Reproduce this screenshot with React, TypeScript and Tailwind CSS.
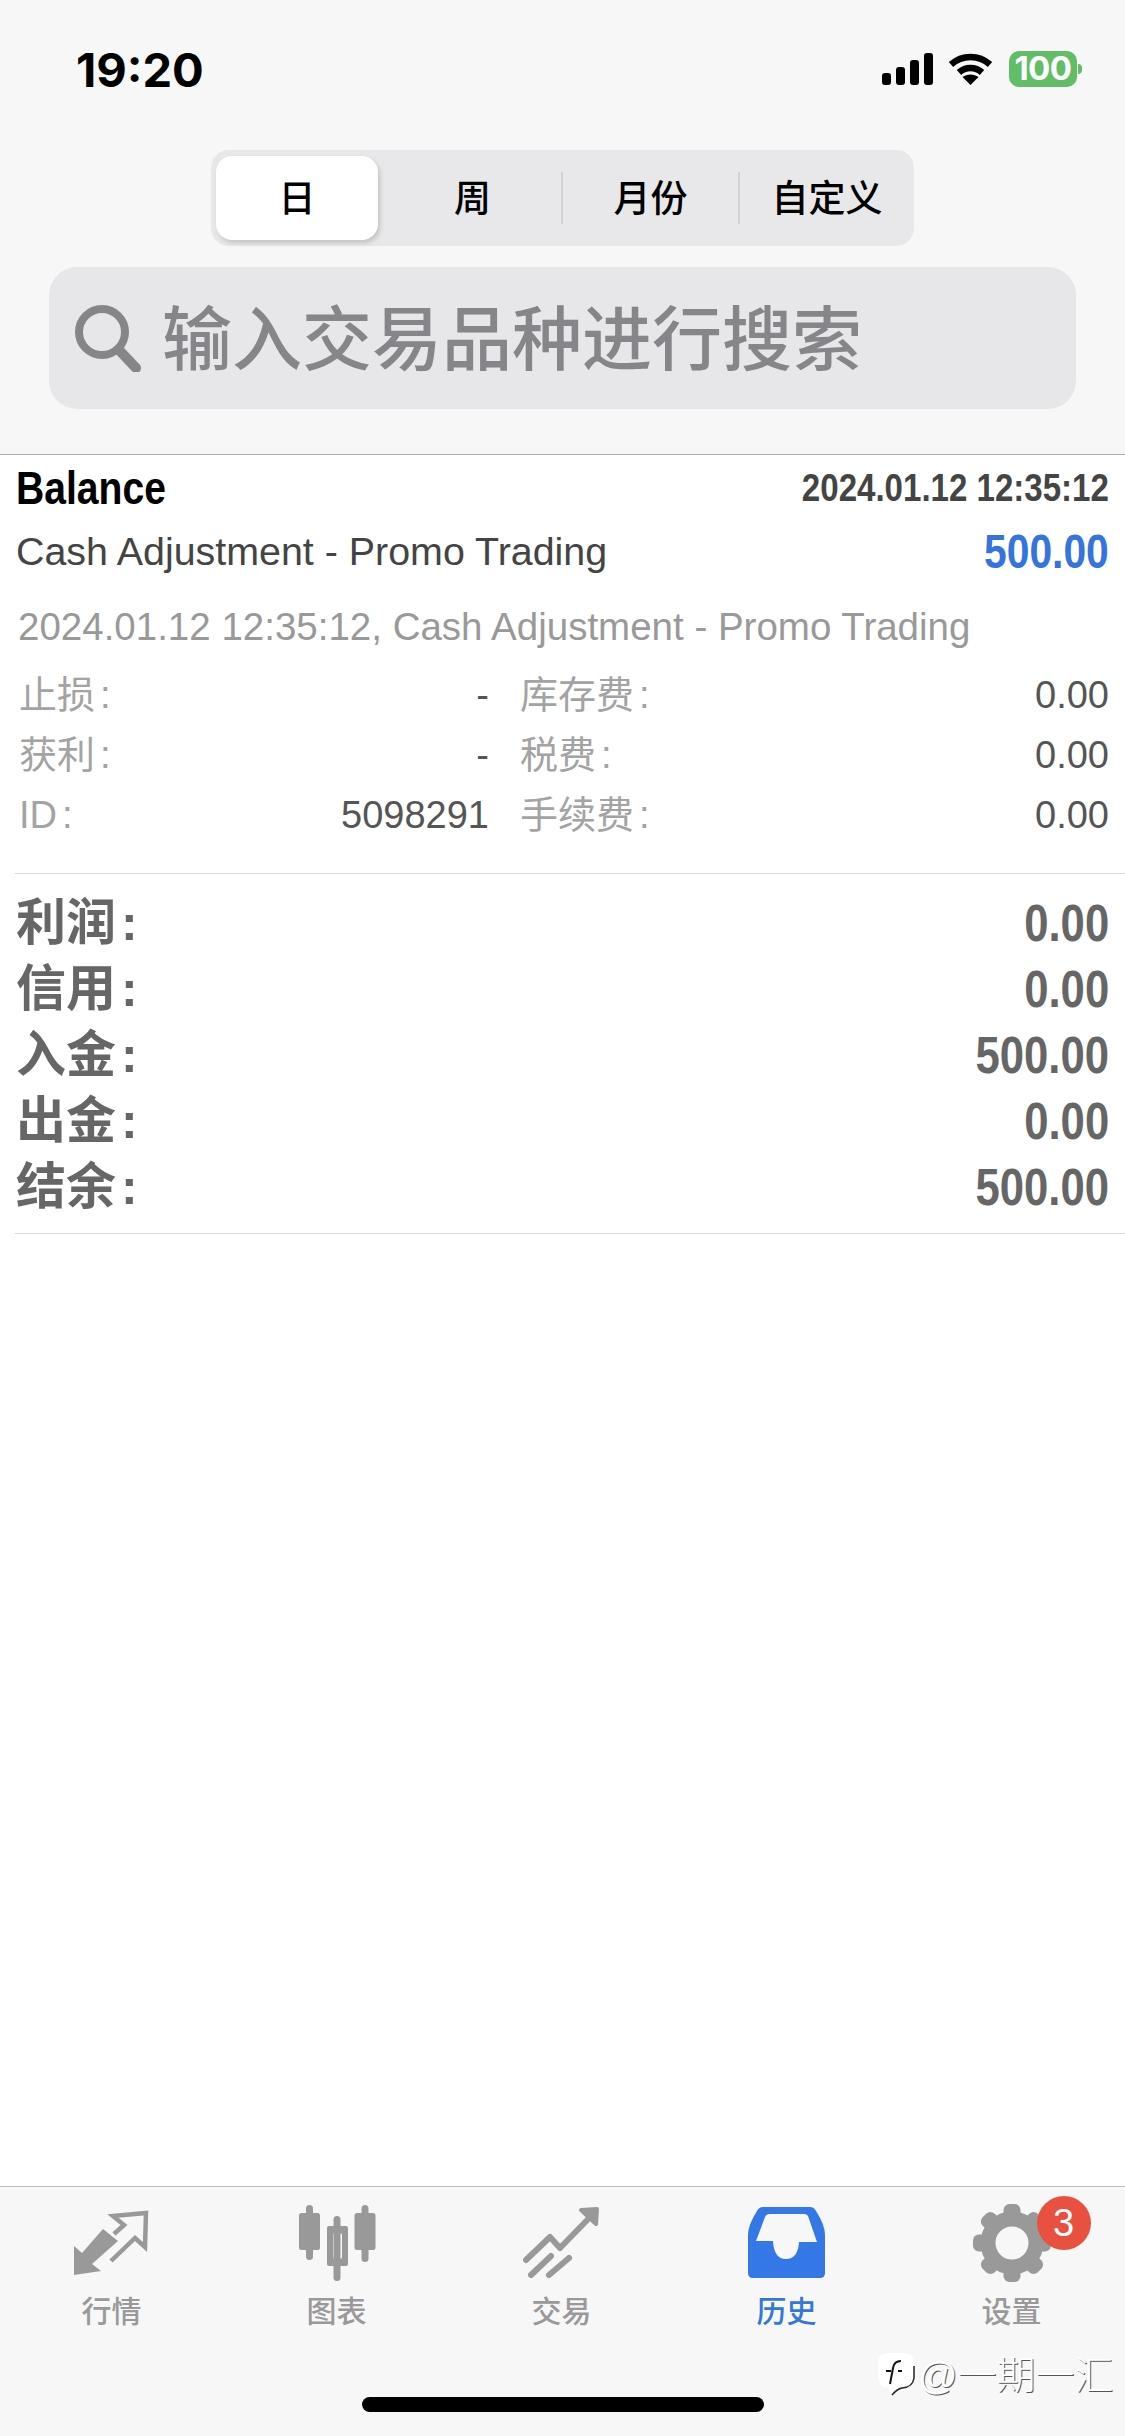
const FONT = "[font-family:'Liberation_Sans','Noto_Sans_CJK_SC',sans-serif]";

function Signal() {
  return (
    <svg width="51" height="32" viewBox="0 0 51 32" fill="#000">
      <rect x="0" y="20" width="9" height="12" rx="3" />
      <rect x="14" y="14" width="9" height="18" rx="3" />
      <rect x="28" y="7" width="9" height="25" rx="3" />
      <rect x="42" y="0" width="9" height="32" rx="3" />
    </svg>
  );
}

function Wifi() {
  return (
    <svg width="45" height="32" viewBox="0 0 45 32" fill="none">
      <path d="M3 11.5 C14 1.5 31 1.5 42 11.5" stroke="#000" strokeWidth="6.5" strokeLinecap="butt" />
      <path d="M11 19.5 C17.5 13.5 27.5 13.5 34 19.5" stroke="#000" strokeWidth="6.5" strokeLinecap="butt" />
      <path d="M22.5 32 L14.5 24 C19 20.5 26 20.5 30.5 24 Z" fill="#000" />
    </svg>
  );
}

function SearchIcon() {
  return (
    <svg width="68" height="68" viewBox="0 0 68 68" fill="none" stroke="#85858a">
      <circle cx="29" cy="28" r="23" strokeWidth="8" />
      <path d="M46 46 L63 64" strokeWidth="10" strokeLinecap="round" />
    </svg>
  );
}

function MarketIcon() {
  return (
    <svg width="75" height="66" viewBox="0 0 75 66" fill="none">
      <path d="M0 65 L0 36 L8 43 L29 19 L44 31 L18 54 L27 61 Z" fill="#999" />
      <path d="M37 51 L61 28 L71 37 L72 3 L39 6 L50 15 L40 24" stroke="#999" strokeWidth="4.5" />
    </svg>
  );
}

function ChartIcon() {
  return (
    <svg width="78" height="76" viewBox="0 0 78 76" fill="#999">
      <rect x="8" y="0" width="7" height="55" rx="3.5" />
      <rect x="1" y="8" width="21" height="37" rx="2.5" />
      <rect x="35.5" y="11" width="7" height="65" rx="3.5" />
      <path fillRule="evenodd" d="M31 21 H48 Q50 21 50 23 V59 Q50 61 48 61 H31 Q29 61 29 59 V23 Q29 21 31 21 Z M37 28 Q35 28 35 30 V52 Q35 54 37 54 H42 Q44 54 44 52 V30 Q44 28 42 28 Z" />
      <rect x="63.5" y="0" width="7" height="57" rx="3.5" />
      <rect x="56.5" y="8" width="21" height="37" rx="2.5" />
    </svg>
  );
}

function TradeIcon() {
  return (
    <svg width="77" height="73" viewBox="0 0 77 73" fill="none" stroke="#999" strokeLinecap="round" strokeLinejoin="round">
      <path d="M3 54 L27 31 L37 42 L71 7" strokeWidth="6" />
      <path d="M58 4 L74 3 L73 18 Z" fill="#999" strokeWidth="4" />
      <path d="M8 69 L28 50" strokeWidth="6" />
      <path d="M26 69 L46 52" strokeWidth="6" />
    </svg>
  );
}

function TrayIcon() {
  return (
    <svg width="77" height="71" viewBox="0 0 77 71">
      <path
        fill="#3478e8"
        fillRule="evenodd"
        d="M15 0 H62 Q66 0 68 4 Q77 18 77 28 V66 Q77 71 72 71 H5 Q0 71 0 66 V28 Q0 18 9 4 Q11 0 15 0 Z M22 7 Q18 7 17 10 L8 34 H25 Q26 52 38 52 Q50 52 51 35 H69 L60 9 Q59 7 56 7 Z"
      />
    </svg>
  );
}

function GearIcon() {
  const angles = [0, 45, 90, 135, 180, 225, 270, 315];
  return (
    <svg width="78" height="78" viewBox="-39 -39 78 78" fill="none">
      <circle r="24" stroke="#999" strokeWidth="15" />
      {angles.map((a) => (
        <rect key={a} x="-8.5" y="-39" width="17" height="14" rx="6" fill="#999" transform={`rotate(${a})`} />
      ))}
    </svg>
  );
}

function DetailCell({ label, value }: { label: string; value: string }) {
  return (
    <div className="flex h-[60px] items-center justify-between">
      <span className="text-[#a3a3a3]">
        {label}
        <span className="ml-[5px]">:</span>
      </span>
      <span className="text-[#555]">{value}</span>
    </div>
  );
}

function SummaryRow({ label, value }: { label: string; value: string }) {
  return (
    <div className="flex h-[66px] items-center justify-between text-[#666]">
      <span className="text-[50px] font-semibold">
        {label}
        <span className="ml-[5px] font-bold">:</span>
      </span>
      <span className="inline-block origin-right scale-x-[0.84] text-[52px] font-bold">{value}</span>
    </div>
  );
}

function Tab({ label, icon, active, badge }: { label: string; icon: React.ReactNode; active?: boolean; badge?: string }) {
  return (
    <div className="flex flex-col items-center">
      <div className="relative flex h-[110px] items-center justify-center pt-[1px]">
        {icon}
        {badge && (
          <span className="absolute left-[64px] top-[9px] flex h-[54px] w-[54px] items-center justify-center rounded-full bg-[#e8503f] text-[38px] font-medium text-white">
            {badge}
          </span>
        )}
      </div>
      <span className={`text-[30px] leading-[30px] font-medium ${active ? "text-[#3478d8]" : "text-[#999]"}`}>{label}</span>
    </div>
  );
}

export default function App() {
  return (
    <div className={`relative flex h-[2436px] w-[1125px] flex-col overflow-hidden bg-white ${FONT}`}>
      <header className="flex flex-col border-b border-[#aaaaaa] bg-[#f7f7f7] pb-[45px]">
        <div className="flex h-[36px] items-center justify-between pr-[43px] pl-[76px] mt-[51px]">
          <span className="font-['Inter'] text-[47px] font-bold leading-none text-black">19:20</span>
          <div className="flex items-center">
            <Signal />
            <div className="ml-[15px]">
              <Wifi />
            </div>
            <div className="ml-[16px] flex items-center">
              <div className="flex h-[36px] w-[68px] items-center justify-center rounded-[10px] bg-[#62bd67] font-['Inter'] text-[33px] font-bold tracking-[-0.5px] text-white">
                100
              </div>
              <div className="ml-[1px] h-[10px] w-[4px] rounded-r-full bg-[#62bd67]" />
            </div>
          </div>
        </div>

        <div className="ml-[211px] mt-[63px] flex h-[96px] w-[703px] items-center rounded-[18px] bg-[#e8e8ea] pl-[5px] text-[37px] font-medium text-black">
          <div className="flex h-[84px] w-[162px] items-center justify-center rounded-[16px] bg-white pt-[3px] shadow-[2px_3px_5px_rgba(0,0,0,0.16)]">日</div>
          <div className="flex w-[183px] justify-center pl-[6px] pt-[3px]">周</div>
          <div className="h-[52px] w-[2px] bg-[#d2d2d4]" />
          <div className="flex w-[175px] justify-center pt-[3px]">月份</div>
          <div className="h-[52px] w-[2px] bg-[#d2d2d4]" />
          <div className="flex flex-1 justify-center pt-[3px]">自定义</div>
        </div>

        <div className="ml-[49px] mt-[21px] flex h-[142px] w-[1027px] items-center rounded-[28px] bg-[#e7e7ea] pl-[24px]">
          <SearchIcon />
          <span className="ml-[21px] pt-[5px] text-[70px] font-medium leading-none text-[#85858a]">输入交易品种进行搜索</span>
        </div>
      </header>

      <main className="ml-[15px] flex flex-col">
        <div className="pr-[16px] pl-[1px]">
          <div className="flex h-[66px] items-center justify-between">
            <span className="inline-block origin-left scale-x-[0.85] text-[46px] font-bold text-black">Balance</span>
            <span className="inline-block origin-right scale-x-[0.87] text-[38px] font-bold text-[#444]">2024.01.12 12:35:12</span>
          </div>
          <div className="flex h-[62px] items-center justify-between">
            <span className="text-[39.4px] text-[#444]">Cash Adjustment - Promo Trading</span>
            <span className="inline-block origin-right scale-x-[0.85] text-[48px] font-bold text-[#3474dc]">500.00</span>
          </div>
          <div className="mt-[18px] flex h-[52px] items-center pl-[2px] text-[38.5px] text-[#999]">
            2024.01.12 12:35:12, Cash Adjustment - Promo Trading
          </div>
          <div className="mt-[12px] grid grid-cols-[470px_589px] gap-x-[31px] pl-[3px] text-[38px] leading-none">
            <DetailCell label="止损" value="-" />
            <DetailCell label="库存费" value="0.00" />
            <DetailCell label="获利" value="-" />
            <DetailCell label="税费" value="0.00" />
            <DetailCell label="ID" value="5098291" />
            <DetailCell label="手续费" value="0.00" />
          </div>
        </div>

        <div className="mt-[28px] border-t border-[#d9d9d9] pt-[16px] pb-[13px] pr-[16px] pl-[1px]">
          <SummaryRow label="利润" value="0.00" />
          <SummaryRow label="信用" value="0.00" />
          <SummaryRow label="入金" value="500.00" />
          <SummaryRow label="出金" value="0.00" />
          <SummaryRow label="结余" value="500.00" />
        </div>
        <div className="border-t border-[#d9d9d9]" />
      </main>

      <div className="flex-1" />

      <footer className="flex h-[250px] flex-col border-t border-[#bbbbbb] bg-[#f7f7f7]">
        <div className="grid grid-cols-5 -translate-x-[1px]">
          <Tab label="行情" icon={<MarketIcon />} />
          <Tab label="图表" icon={<ChartIcon />} />
          <Tab label="交易" icon={<TradeIcon />} />
          <Tab label="历史" icon={<TrayIcon />} active />
          <Tab label="设置" icon={<GearIcon />} badge="3" />
        </div>
        <div className="mx-auto mt-[70px] h-[15px] w-[402px] rounded-full bg-black" />
      </footer>

      <div className="absolute left-[877px] top-[2352px] flex items-center">
        <svg width="38" height="46" viewBox="0 0 38 46">
          <path d="M10 1 H27 Q37 1 37 12 V24 Q37 34 26 35 Q20 36 14 44 L13 36 Q1 36 1 24 V11 Q1 1 10 1 Z" fill="#fff" />
          <path d="M24 9 Q17 9 16 16 L13 32 M9 19 H14 M21 19 H25" fill="none" stroke="#111" strokeWidth="2" />
          <path d="M37 14 V26 Q36 35 25 36 Q20 37 15 43" fill="none" stroke="#222" strokeWidth="1.5" />
        </svg>
        <span className="ml-[3px] text-[39px] font-light leading-none text-white [text-shadow:1px_1px_0_#555]">@一期一汇</span>
      </div>
    </div>
  );
}
